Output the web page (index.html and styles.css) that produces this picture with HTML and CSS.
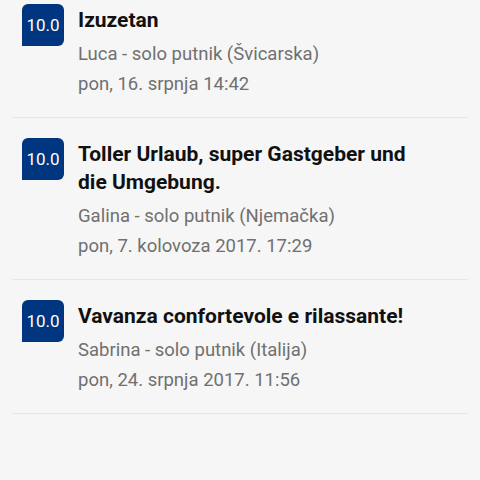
FILE: index.html
```html
<!DOCTYPE html>
<html lang="hr">
<head>
    <meta charset="UTF-8">
    <meta name="viewport" content="width=device-width, initial-scale=1.0">
    <title>Recenzije</title>
    <link rel="stylesheet" href="styles.css">
</head>
<body>
    <!-- 리뷰 목록 -->
    <div class="review-list">
        <div class="review">
            <div class="score">10.0</div>
            <div class="review-body">
                <div class="review-title">Izuzetan</div>
                <div class="review-meta">Luca - solo putnik (Švicarska)</div>
                <div class="review-date">pon, 16. srpnja 14:42</div>
            </div>
        </div>
        <div class="review">
            <div class="score">10.0</div>
            <div class="review-body">
                <div class="review-title">Toller Urlaub, super Gastgeber und die Umgebung.</div>
                <div class="review-meta">Galina - solo putnik (Njemačka)</div>
                <div class="review-date">pon, 7. kolovoza 2017. 17:29</div>
            </div>
        </div>
        <div class="review">
            <div class="score">10.0</div>
            <div class="review-body">
                <div class="review-title">Vavanza confortevole e rilassante!</div>
                <div class="review-meta">Sabrina - solo putnik (Italija)</div>
                <div class="review-date">pon, 24. srpnja 2017. 11:56</div>
            </div>
        </div>
    </div>
</body>
</html>
```

FILE: styles.css
```css
/* 전체 레이아웃 */
body {
    margin: 0;
    font-family: Roboto, "Noto Sans", "Liberation Sans", sans-serif;
    background-color: #f6f6f6;
    color: #111;
}

.review-list {
    padding: 0 12px;
}

/* 리뷰 항목 */
.review {
    display: flex;
    align-items: flex-start;
    padding: 22px 0 18px 10px;
    border-bottom: 1px solid #e6e6e6;
}

.review:first-child {
    padding-top: 6px;
}

/* 점수 배지 */
.score {
    flex: none;
    width: 42px;
    height: 42px;
    margin-top: -2px;
    margin-right: 14px;
    background-color: #003580;
    color: #fff;
    border-radius: 6px 6px 6px 0;
    font-size: 17px;
    display: flex;
    align-items: center;
    justify-content: center;
}

.review-body {
    width: 350px;
}

.review-title {
    font-size: 21px;
    font-weight: 700;
    line-height: 28px;
    color: #111;
}

.review-meta,
.review-date {
    font-size: 18.5px;
    line-height: 30px;
    color: #707070;
}

.review-meta {
    margin-top: 5px;
}
```
